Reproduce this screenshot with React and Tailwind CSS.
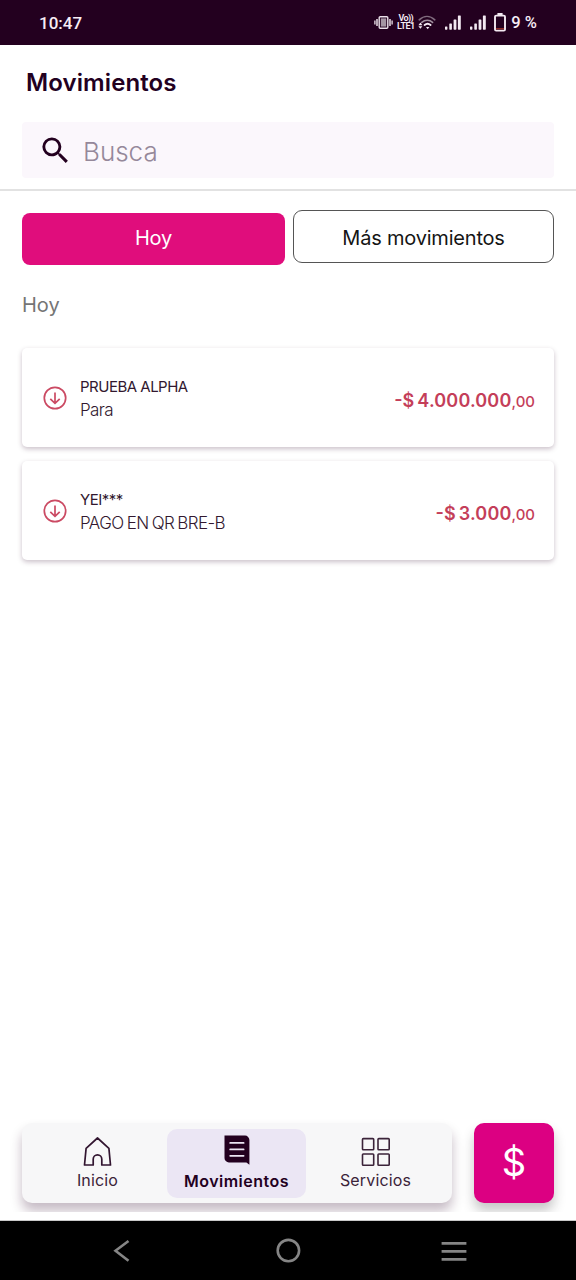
// ./App.jsx
import React, { useState } from "react";
import { MdSearch } from "react-icons/md";

const movements = [
  { id: 1, name: "PRUEBA ALPHA", detail: "Para", amount: "4.000.000", cents: "00" },
  { id: 2, name: "YEI***", detail: "PAGO EN QR BRE-B", amount: "3.000", cents: "00" },
];

const SignalIcon = () => (
  <svg className="w-4 h-4" viewBox="0 0 16 16" fill="#f3e9f2">
    <rect x="0" y="11.5" width="2.4" height="3.2" rx="0.6" />
    <rect x="4.3" y="8.5" width="2.6" height="6.2" rx="0.6" />
    <rect x="8.6" y="4.5" width="2.8" height="10.2" rx="0.6" />
    <rect x="12.9" y="0.5" width="2.9" height="14.2" rx="0.6" />
  </svg>
);

const StatusBar = () => (
  <header className="h-[45px] shrink-0 bg-[#23001f] text-[#f6edf5] flex items-center pl-[39px] pr-[39px] font-['Roboto',sans-serif]">
    <span className="text-[17px] font-medium leading-5">10:47</span>
    <div className="ml-auto flex items-center">
      {/* vibrate */}
      <svg className="w-[19px] h-4" viewBox="0 0 19 16" fill="none" stroke="#eadfe9">
        <rect x="5.2" y="1.8" width="8.6" height="11.4" rx="1" strokeWidth="1.4" />
        <rect x="6.8" y="3.4" width="5.4" height="8.2" fill="#a495a3" stroke="none" />
        <path d="M3 4v7M16 4v7" strokeWidth="1.5" />
        <path d="M.9 5.6v4M18.1 5.6v4" strokeWidth="1.3" />
      </svg>
      <div className="ml-[3px] w-[19px] flex flex-col items-center font-semibold">
        <span className="text-[9px] leading-[7px] tracking-[-0.6px]">Vo))</span>
        <span className="text-[9px] leading-[8px] tracking-[-0.5px]">LTE1</span>
      </div>
      <svg className="ml-[3px] w-[18px] h-4" viewBox="0 0 18 16" fill="none" strokeLinecap="round">
        <path d="M1.2 4.8C6 .4 12 .4 16.8 4.8" stroke="#806b7e" strokeWidth="1.6" />
        <path d="M3.8 7.4C7 4.6 11.6 4.6 14.6 7.4" stroke="#a08e9e" strokeWidth="1.6" />
        <path d="M6.6 10c1.8-1.5 4.2-1.5 6 0" stroke="#f3e9f2" strokeWidth="1.9" />
        <path d="M8 12h3.4L9.7 14.2z" fill="#f3e9f2" />
        <path d="M.4 10.2 2.4 7.6l2 2.6zM.4 11.2 2.4 13.8l2-2.6z" fill="#f3e9f2" />
      </svg>
      <div className="ml-[9px]">
        <SignalIcon />
      </div>
      <div className="ml-[9px]">
        <SignalIcon />
      </div>
      <svg className="ml-2 w-3 h-[19px]" viewBox="0 0 12 19" fill="none">
        <rect x="3.4" y="0" width="5.2" height="2.4" rx="0.5" fill="#f3e9f2" />
        <rect x="1" y="2.6" width="10" height="15" rx="1.2" stroke="#f3e9f2" strokeWidth="1.9" />
        <rect x="2" y="15" width="8" height="1.4" fill="#8f2b28" />
      </svg>
      <span className="ml-[5px] text-[16.5px] font-medium leading-5">9 %</span>
    </div>
  </header>
);

const MovementCard = ({ name, detail, amount, cents }) => (
  <li className="h-[99px] flex items-center pl-[21px] pr-[19px] rounded-[5px] bg-white shadow-[0_2px_5px_rgba(50,10,45,0.26)]">
    <svg className="w-6 h-6 shrink-0" viewBox="0 0 24 24" fill="none" stroke="#cb4a63" strokeWidth="1.7">
      <circle cx="12" cy="12" r="10.7" />
      <path d="M12 6.4v11M7.3 12.8l4.7 4.6 4.7-4.6" />
    </svg>
    <div className="ml-[13px] mt-[3px] text-[#32182f]">
      <p className="text-[15px] leading-[22px] tracking-[-0.5px]">{name}</p>
      <p className="text-[17px] leading-6 font-light tracking-[-0.6px] [word-spacing:-1px]">
        {detail}
      </p>
    </div>
    <p className="ml-auto mt-[8px] text-[18px] leading-6 font-semibold text-[#c43e59] whitespace-nowrap">
      -$<span className="ml-[3px] tracking-[0.17px]">{amount}</span>
      <span className="text-[15px] font-medium">,{cents}</span>
    </p>
  </li>
);

const HomeIcon = () => (
  <svg className="w-[30px] h-[30px] overflow-visible" viewBox="0 0 30 30" fill="none" stroke="#321530" strokeWidth="1.7" strokeLinejoin="round">
    <path d="M14.5 3 25.9 13.3 27.5 30H18.8V24.2a4.3 4.3 0 0 0-8.6 0V30H1.5L3.1 13.3z" />
  </svg>
);

const ReceiptIcon = () => (
  <svg className="w-[30px] h-[30px]" viewBox="0 0 30 30">
    <path d="M2.5 0.6H23a4.4 4.4 0 0 1 4.4 4.4V29.8L24.4 27.4H6.9A4.4 4.4 0 0 1 2.5 23z" fill="#23001f" />
    <path d="M8.2 7.9h13.4M8.2 14.4h13.4M8.2 20.8h13.4" stroke="#ece5f4" strokeWidth="1.8" strokeLinecap="round" />
  </svg>
);

const GridIcon = () => (
  <svg className="w-[30px] h-[30px] overflow-visible" viewBox="0 0 30 30" fill="none" stroke="#3b2339" strokeWidth="1.6">
    <rect x="1.5" y="3.6" width="11.2" height="11.2" rx="0.8" />
    <rect x="17" y="3.6" width="11.2" height="11.2" rx="0.8" />
    <rect x="1.5" y="19" width="11.2" height="11.2" rx="0.8" />
    <rect x="17" y="19" width="11.2" height="11.2" rx="0.8" />
  </svg>
);

const navItems = [
  { id: "inicio", label: "Inicio", Icon: HomeIcon },
  { id: "movimientos", label: "Movimientos", Icon: ReceiptIcon },
  { id: "servicios", label: "Servicios", Icon: GridIcon },
];

const BottomNav = ({ active, onSelect }) => (
  <div className="mt-auto mb-[9px] flex gap-[22px] pl-[22px] pr-[22px]">
    <nav className="flex-1 h-20 flex items-center pl-[6px] rounded-[10px] bg-[#f7f7f8] shadow-[0_8px_12px_rgba(50,10,45,0.28)]">
      {navItems.map(({ id, label, Icon }) => (
        <button
          key={id}
          onClick={() => onSelect(id)}
          className={`w-[139px] h-[69px] pt-[6px] rounded-[10px] flex flex-col items-center ${
            active === id
              ? "bg-[#ebe6f4] font-semibold text-[#23001f] tracking-[0.5px]"
              : "text-[#3b2339] font-normal tracking-[0.15px]"
          }`}
        >
          <Icon />
          <span className={`${active === id ? "mt-[4px]" : "mt-[3px]"} text-[16px] leading-6`}>{label}</span>
        </button>
      ))}
    </nav>
    <button className="w-20 h-20 pb-[2px] rounded-[10px] bg-[#dc0082] text-white flex items-center justify-center text-[38px] font-normal leading-none shadow-[0_8px_12px_rgba(40,40,40,0.26)]">
      $
    </button>
  </div>
);

const SystemNav = () => (
  <footer className="h-[60px] shrink-0 mt-2 bg-black border-t border-[#c9c9c9] box-border">
    <svg className="w-full h-[59px]" viewBox="0 0 576 59" fill="none" stroke="#858585">
      <path d="M128.5 20 115.5 29.8 128.5 39.8" strokeWidth="2.6" />
      <circle cx="288.4" cy="29.6" r="10.7" strokeWidth="2.6" />
      <path d="M441.6 22.4h24.8M441.6 30.4h24.8M441.6 38.4h24.8" strokeWidth="2.8" />
    </svg>
  </footer>
);

const App = () => {
  const [active, setActive] = useState("movimientos");

  return (
    <div className="w-full h-screen flex flex-col bg-white overflow-hidden font-['Inter',sans-serif]">
      <StatusBar />

      <main className="flex-1 min-h-0 flex flex-col overflow-hidden">
        <div className="px-[22px] pb-[11px] border-b-2 border-[#e2e2e2]">
          <h1 className="pt-[22px] pl-[4px] text-[24px] leading-8 font-semibold text-[#23001f] tracking-[0.1px]">
            Movimientos
          </h1>
          <label className="mt-[23px] h-[56px] flex items-center pl-[16px] rounded-[4px] bg-[#fbf7fc]">
            <MdSearch className="w-[35px] h-[35px] shrink-0 text-[#23001f]" />
            <input
              type="text"
              placeholder="Busca"
              className="ml-[10px] mt-[2px] w-full text-[26px] font-light outline-none placeholder-[#95889a]"
            />
          </label>
        </div>

        <div className="mt-[19px] px-[22px] flex gap-[8px]">
          <button className="mt-[3px] pb-[2px] w-[263px] h-[52px] rounded-[8px] bg-[#e00d7c] text-white text-[20px] leading-6 tracking-[-0.2px]">
            Hoy
          </button>
          <button className="flex-1 pt-[2px] h-[53px] rounded-[9px] border border-[#555555] text-[#151515] text-[20px] leading-6 tracking-[-0.2px]">
            Más movimientos
          </button>
        </div>

        <h2 className="mt-[28px] ml-[22px] text-[20px] leading-6 text-[#757575]">Hoy</h2>

        <ul className="mt-[31px] px-[22px] flex flex-col gap-[14px]">
          {movements.map((m) => (
            <MovementCard key={m.id} {...m} />
          ))}
        </ul>

        <BottomNav active={active} onSelect={setActive} />
      </main>

      <SystemNav />
    </div>
  );
};

export default App;
